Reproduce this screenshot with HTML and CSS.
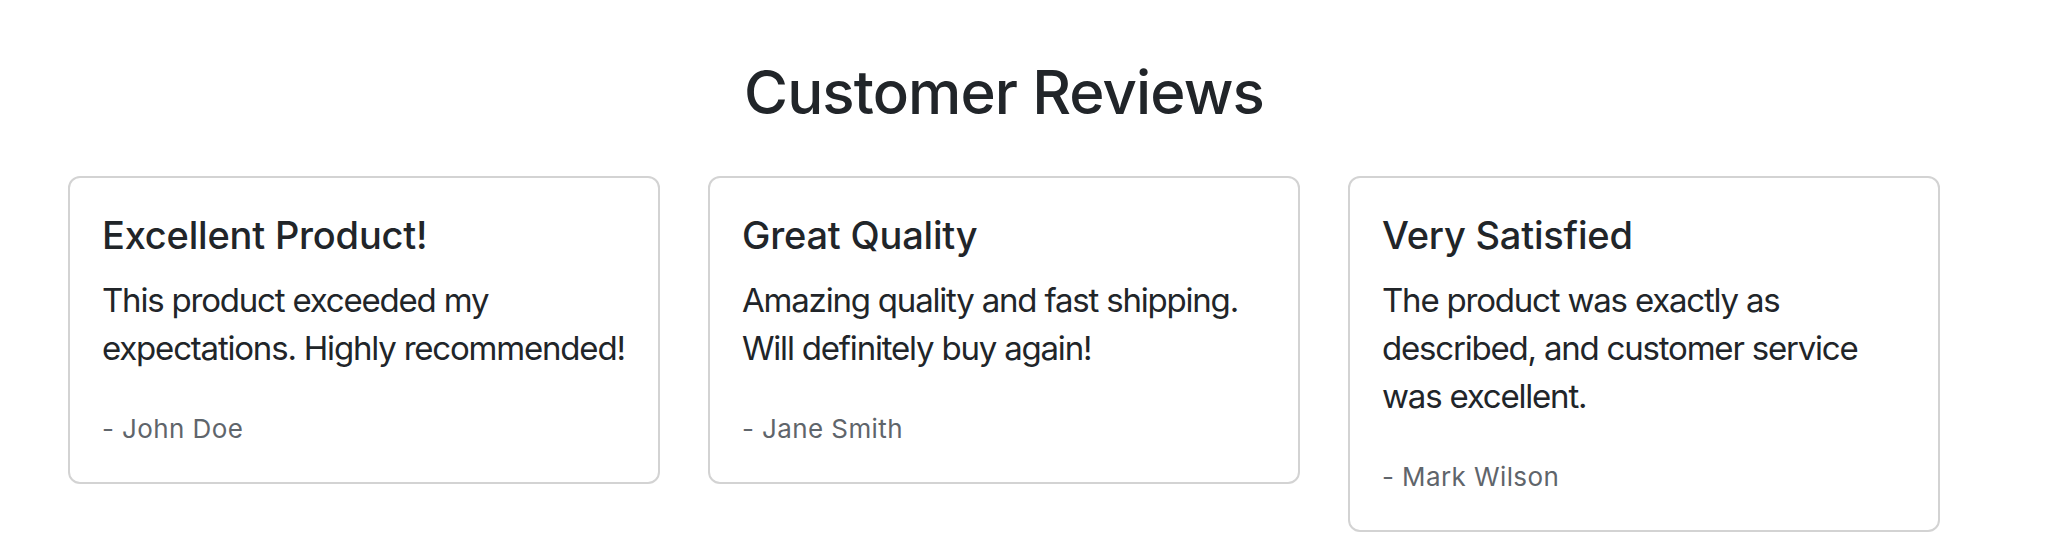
FILE: index.html
```html
<!DOCTYPE html>
<html lang="en">
<head>
<meta charset="utf-8">
<title>Customer Reviews</title>
<link rel="stylesheet" href="styles.css">
</head>
<body>
<main class="page">
  <h1 class="title">Customer Reviews</h1>
  <div class="cards">
    <article class="card">
      <h2 class="card-title">Excellent Product!</h2>
      <p class="card-text">This product exceeded my expectations. Highly recommended!</p>
      <p class="author">- John Doe</p>
    </article>
    <article class="card">
      <h2 class="card-title">Great Quality</h2>
      <p class="card-text">Amazing quality and fast shipping. Will definitely buy again!</p>
      <p class="author">- Jane Smith</p>
    </article>
    <article class="card">
      <h2 class="card-title">Very Satisfied</h2>
      <p class="card-text">The product was exactly as described, and customer service was excellent.</p>
      <p class="author">- Mark Wilson</p>
    </article>
  </div>
</main>
</body>
</html>
```
FILE: styles.css
```css
html, body {
  margin: 0;
  padding: 0;
  background: #ffffff;
}
body {
  font-family: Inter, "Noto Sans", "Liberation Sans", sans-serif;
  color: #212529;
}
.page {
  width: 1872px;
  margin-left: 68px;
  padding-top: 56px;
}
.title {
  margin: 0 0 48px 0;
  font-size: 60px;
  line-height: 72px;
  font-weight: 500;
  letter-spacing: -0.9px;
  text-align: center;
}
.cards {
  display: grid;
  grid-template-columns: repeat(3, 592px);
  column-gap: 48px;
  align-items: start;
}
.card {
  border: 2px solid #d3d3d3;
  border-radius: 12px;
  padding: 33px 32px 35px 32px;
  background: #ffffff;
}
.card-title {
  margin: 0 0 17px 0;
  font-size: 38px;
  line-height: 48px;
  font-weight: 500;
  letter-spacing: -0.2px;
}
.card-text {
  margin: 0 0 38.5px 0;
  font-size: 33px;
  line-height: 48px;
  font-weight: 400;
  letter-spacing: -1.2px;
}
.author {
  margin: 0;
  font-size: 26px;
  line-height: 36px;
  letter-spacing: 0.4px;
  color: #5f656b;
}
```
